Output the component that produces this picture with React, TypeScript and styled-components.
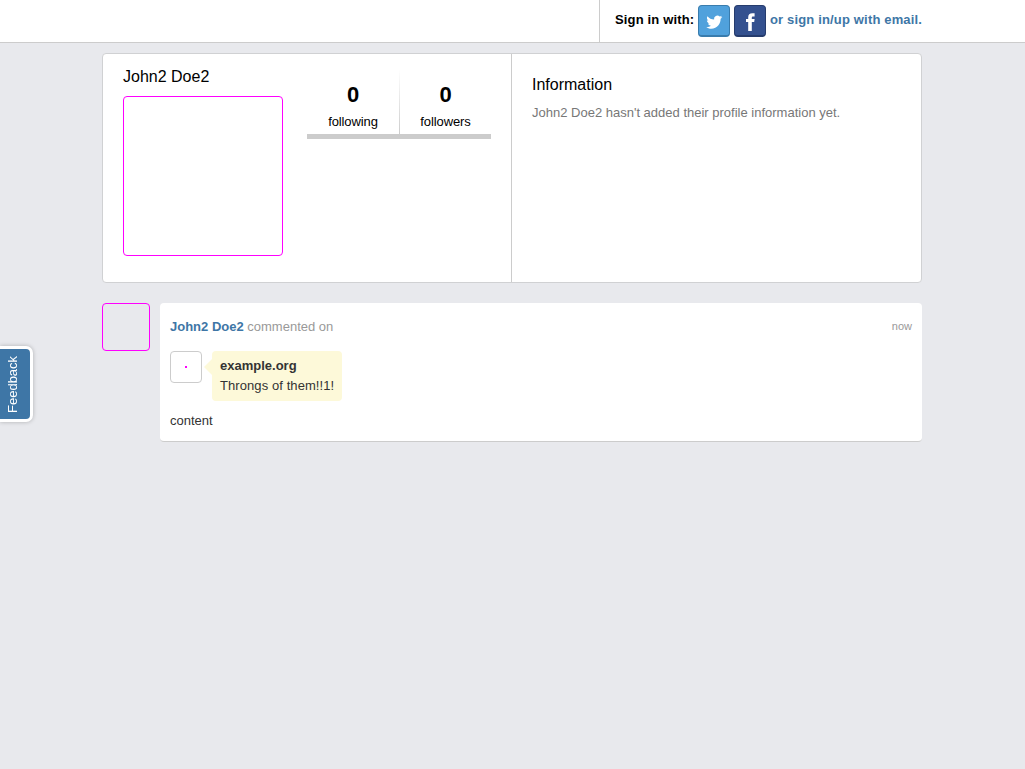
import React from "react";
import styled, { createGlobalStyle } from "styled-components";

const GlobalStyle = createGlobalStyle`
  * { box-sizing: border-box; }
  body {
    margin: 0;
    min-height: 100vh;
    background: #e8e9ed;
    color: #000;
    font: 13px/20px "Liberation Sans", Arial, sans-serif;
  }
  a { color: #3e76a6; font-weight: bold; text-decoration: none; }
  h2, p { margin: 0; font-weight: normal; }
`;

const Header = styled.header`
  height: 43px;
  padding: 0 103px 0 102px;
  display: flex;
  justify-content: flex-end;
  background: #fff;
  border-bottom: 1px solid #ccc;
`;

const SignIn = styled.div`
  width: 323px;
  height: 42px;
  padding: 5px 0 0 15px;
  display: flex;
  align-items: flex-start;
  gap: 4px;
  border-left: 1px solid #ccc;
  white-space: nowrap;
`;

const SignInText = styled.span<{ $width: number }>`
  width: ${(p) => p.$width}px;
  padding-top: 5px;
  font-weight: bold;
  letter-spacing: 0.16px;
`;

const SocialButton = styled.a<{ $color: string; $edge: string }>`
  width: 32px;
  height: 32px;
  flex: none;
  border: 1px solid ${(p) => p.$edge};
  border-bottom-width: 2px;
  border-radius: 4px;
  background: ${(p) => p.$color};
  svg { display: block; width: 30px; height: 29px; fill: #fff; }
`;

const Main = styled.main`
  margin: 10px 103px 0 102px;
`;

const Profile = styled.section`
  height: 230px;
  display: flex;
  background: #fff;
  border: 1px solid #d0d1d3;
  border-radius: 4px;
`;

const Summary = styled.div`
  width: 409px;
  padding: 13px 20px 0;
  display: flex;
  flex: none;
  justify-content: space-between;
  border-right: 1px solid #ccc;
`;

const Title = styled.h2`
  font-size: 16px;
  line-height: 20px;
`;

const Picture = styled.div<{ $size: number }>`
  width: ${(p) => p.$size}px;
  height: ${(p) => p.$size}px;
  flex: none;
  border: 1px solid #f0f;
  border-radius: 4px;
`;

const Identity = styled.div`
  display: flex;
  flex-direction: column;
  gap: 9px;
`;

const Stats = styled.div`
  width: 184px;
  height: 69px;
  margin-top: 3px;
  display: flex;
  border-bottom: 5px solid #ccc;
`;

const Stat = styled.div`
  width: 91px;
  padding-top: 11px;
  text-align: center;
  letter-spacing: -0.1px;
  &:first-child {
    width: 93px;
    border-right: 1px solid;
    border-image: linear-gradient(#fff, #ccc) 1;
  }
`;

const Count = styled.strong`
  display: block;
  height: 31px;
  font-size: 22px;
  line-height: 28px;
`;

const Information = styled.div`
  padding: 21px 20px 0;
`;

const Empty = styled.p`
  margin-top: 8px;
  color: #777;
`;

const Activity = styled.article`
  margin-top: 20px;
  display: flex;
  gap: 10px;
  align-items: flex-start;
`;

const Comment = styled.div`
  flex: 1;
  height: 139px;
  padding: 14px 10px 0;
  background: #fff;
  border-bottom: 1px solid #ccc;
  border-radius: 4px;
  color: #333;
`;

const CommentHeader = styled.div`
  display: flex;
  justify-content: space-between;
  color: #999;
`;

const Time = styled.time`
  height: 20px;
  font-size: 11px;
  line-height: 18px;
`;

const Site = styled.div`
  margin: 14px 0 10px;
  display: flex;
  gap: 10px;
  align-items: flex-start;
`;

const SiteIcon = styled.div`
  width: 32px;
  height: 32px;
  display: grid;
  place-items: center;
  border: 1px solid #ccc;
  border-radius: 4px;
  &::before {
    content: "";
    width: 2px;
    height: 2px;
    background: #f0f;
  }
`;

const Bubble = styled.div`
  position: relative;
  width: 130px;
  height: 50px;
  padding: 5px 8px;
  border-radius: 4px;
  background: #fdf9d9;
  white-space: nowrap;
  p { letter-spacing: 0.08px; }
  &::before {
    content: "";
    position: absolute;
    left: -8px;
    top: 8px;
    border: 8px solid transparent;
    border-left: 0;
    border-right-color: #fdf9d9;
  }
`;

const Feedback = styled.button`
  position: fixed;
  left: 0;
  top: 346px;
  width: 33px;
  height: 76px;
  padding: 0;
  border: 3px solid #fff;
  border-left: 0;
  border-radius: 0 7px 7px 0;
  background: #3e76a6;
  box-shadow: 0 0 4px rgba(0, 0, 0, 0.25);
  color: #fff;
  font: 13px/26px "Liberation Sans", Arial, sans-serif;
  span {
    display: block;
    width: 26px;
    height: 70px;
    writing-mode: vertical-rl;
    transform: rotate(180deg);
    text-align: center;
  }
`;

export default function App() {
  return (
    <>
      <GlobalStyle />
      <Header>
        <SignIn>
          <SignInText $width={79}>Sign in with:</SignInText>
          <SocialButton $color="#50a1dc" $edge="#397cad" href="#" aria-label="Twitter">
            <svg viewBox="0 0 30 29">
              <path transform="translate(-.5 1)" d="M23.8 10.1c-.6.3-1.2.5-1.9.5.7-.4 1.2-1 1.4-1.8-.6.4-1.3.7-2.1.8a3.3 3.3 0 0 0-5.6 3c-2.7-.1-5.1-1.4-6.7-3.4-.9 1.5-.4 3.4 1 4.4-.5 0-1-.2-1.5-.4 0 1.6 1.1 2.9 2.6 3.2-.5.1-1 .2-1.5.1.4 1.3 1.6 2.2 3 2.3-1.3 1-3.1 1.6-4.9 1.4 1.5.9 3.2 1.5 5.1 1.5 6.1 0 9.6-5.1 9.4-9.9.7-.5 1.3-1 1.7-1.7Z" />
            </svg>
          </SocialButton>
          <SocialButton $color="#34518f" $edge="#263c6d" href="#" aria-label="Facebook">
            <svg viewBox="0 0 30 29">
              <path d="M13.2 25v-8.9H11v-3.2h2.2v-1.6c0-2.9 1.4-4.1 4.2-4.1h2.2v3.2h-1.4c-1 0-1.4.4-1.4 1.3v1.2h2.8l-.4 3.2h-2.4V25Z" />
            </svg>
          </SocialButton>
          <SignInText $width={152}><a href="#">or sign in/up with email.</a></SignInText>
        </SignIn>
      </Header>
      <Main>
        <Profile>
          <Summary>
            <Identity>
              <Title>John2 Doe2</Title>
              <Picture $size={160} />
            </Identity>
            <Stats>
              <Stat><Count>0</Count>following</Stat>
              <Stat><Count>0</Count>followers</Stat>
            </Stats>
          </Summary>
          <Information>
            <Title>Information</Title>
            <Empty>John2 Doe2 hasn't added their profile information yet.</Empty>
          </Information>
        </Profile>
        <Activity>
          <Picture $size={48} />
          <Comment>
            <CommentHeader>
              <span><a href="#">John2 Doe2</a> commented on</span>
              <Time>now</Time>
            </CommentHeader>
            <Site>
              <SiteIcon />
              <Bubble>
                <strong>example.org</strong>
                <p>Throngs of them!!1!</p>
              </Bubble>
            </Site>
            <p>content</p>
          </Comment>
        </Activity>
      </Main>
      <Feedback><span>Feedback</span></Feedback>
    </>
  );
}
